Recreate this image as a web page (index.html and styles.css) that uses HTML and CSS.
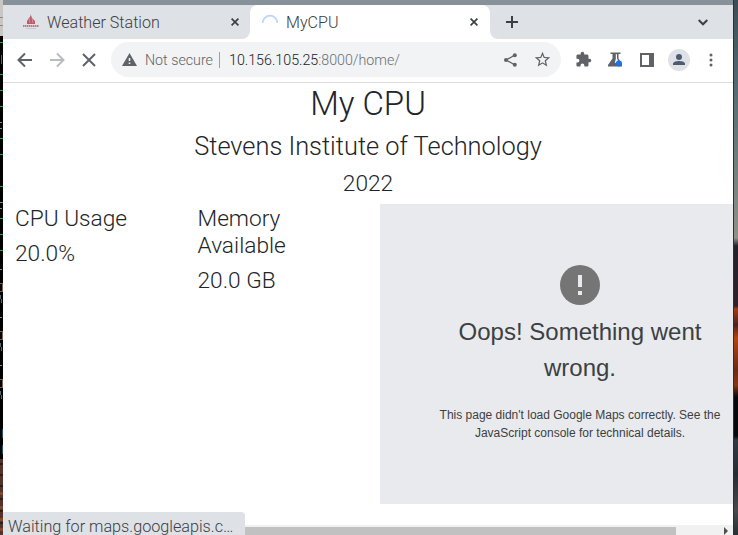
FILE: index.html
```html
<!DOCTYPE html>
<html lang="en">
<head>
<meta charset="utf-8">
<title>MyCPU</title>
<link rel="stylesheet" href="styles.css">
</head>
<body>
<div class="desktop">
  <div class="edge-left">
    <svg width="3" height="535" shape-rendering="crispEdges">
      <rect width="3" height="36" fill="#c9c7c4"/><path d="M0 17.5h3M0 25.5h3" stroke="#8d8b88"/>
      <rect y="36" width="3" height="423" fill="#000"/>
      <path d="M0 42.5h3M0 74.5h3M0 90.5h3M0 106.500h3M0 138.500h3M0 154.500h3M0 186.500h3M0 202.500h3M0 218.500h3M0 234.500h3M0 250.500h3" stroke="#2da83a"/>
      <path d="M0 122.500h2M0 128.500h2M0 202.500h2M0 208.500h2M0 269.500h2M0 317.500h2M0 365.500h2" stroke="#8a8a8a"/>
      <path d="M0 283.500h2v8h-2M0 331.500h2v8h-2M0 379.500h2v8h-2" fill="none" stroke="#77614d"/>
      <path d="M0 295l2 8M0 343l2 8M0 391l2 8M1.500 55v9" stroke="#566478"/>
      <path d="M2.500 429v9M2.500 445v9" stroke="#1f526b"/>
      <rect y="459" width="3" height="76" fill="#54332a"/>
      <path d="M0 464h3M0 475h3M0 486h3M0 499h3M0 511h3M0 523h3" stroke="#2a1d1b" stroke-width="2"/>
      <path d="M0 493h3M0 507h3M0 519h3M0 529h3" stroke="#84452f" stroke-width="3"/>
    </svg>
  </div>
  <div class="window">
    <div class="tabs">
      <div class="tab inactive">
        <svg class="favicon" width="16" height="16" viewBox="0 0 16 16"><path d="M7.500 0v2L6 4 4 7v3h8V7L9 4z" fill="#b85c69"/><path d="M6 4l1 5M9 4l1 5" stroke="#dea5ac" stroke-width=".7"/><path d="M0 12h16" stroke="#c27882" stroke-width="2" stroke-dasharray="1.500 .5"/><path d="M3 14.500h10" stroke="#d1bdc3" stroke-width=".8"/></svg>
        <span class="tab-name">Weather Station</span>
        <svg class="close" width="8" height="8" viewBox="0 0 8 8"><path d="M.6.600l6.800 6.800M7.400.6.600 7.400"/></svg>
      </div>
      <div class="tab active">
        <svg class="favicon" width="16" height="16" viewBox="0 0 16 16"><path d="M.7 9a7.300 7.300 0 1 1 14.600 0" fill="none" stroke="#bcd6fa" stroke-width="1.700"/></svg>
        <span class="tab-name">MyCPU</span>
        <svg class="close" width="8" height="8" viewBox="0 0 8 8"><path d="M.6.600l6.800 6.800M7.400.6.600 7.400"/></svg>
      </div>
      <div class="tab-tools">
        <svg width="12" height="12" viewBox="0 0 12 12"><path d="M6 0v12M0 6h12"/></svg>
        <svg width="10" height="7" viewBox="0 0 10 7"><path d="M.7 1 5 5.300 9.300 1"/></svg>
      </div>
    </div>
    <div class="toolbar">
      <svg class="ic back" width="24" height="24" viewBox="0 0 24 24"><path d="M19 12H6M12 5.500 5.500 12l6.500 6.500"/></svg>
      <svg class="ic forward" width="24" height="24" viewBox="0 0 24 24"><path d="M5 12h13M12 5.500l6.500 6.500-6.500 6.500"/></svg>
      <svg class="ic stop" width="24" height="24" viewBox="0 0 24 24"><path d="M6 6l12 12M18 6 6 18"/></svg>
      <div class="omnibox">
        <svg class="warn" width="15" height="13" viewBox="0 0 15 13"><path d="M7.500 0 15 13H0z" fill="#5f6368"/><path d="M7.500 5v3M7.500 9.500V11" stroke="#f1f3f4" stroke-width="1.600"/></svg>
        <span class="insecure">Not secure</span><i class="divider"></i>
        <span class="url"><b>10.156.105.25</b>:8000/home/</span>
        <svg class="share" width="13" height="14" viewBox="0 0 13 14"><path d="M11 2 2 7l9 5" fill="none" stroke="#5f6368" stroke-width="1.300"/><g fill="#5f6368"><circle cx="10.800" cy="2.200" r="2"/><circle cx="2" cy="7" r="2"/><circle cx="10.800" cy="11.800" r="2"/></g></svg>
        <svg class="star" width="17" height="17" viewBox="1 1 22 22"><path fill="#5f6368" d="M22 9.240l-7.190-.62L12 2 9.190 8.630 2 9.240l5.460 4.730L5.820 21 12 17.270 18.180 21l-1.630-7.030L22 9.240zM12 15.400l-3.760 2.270 1-4.280-3.320-2.880 4.380-.38L12 6.100l1.710 4.040 4.380.38-3.320 2.880 1 4.280L12 15.400z"/></svg>
      </div>
      <svg class="puzzle" width="17" height="17" viewBox="0 0 24 24"><path fill="#5f6368" d="M20.500 11H19V7c0-1.100-.9-2-2-2h-4V3.500a2.500 2.500 0 0 0-5 0V5H4c-1.100 0-2 .9-2 2v3.800h1.500a2.700 2.700 0 0 1 0 5.400H2V20c0 1.100.9 2 2 2h3.800v-1.500a2.700 2.700 0 0 1 5.400 0V22H17c1.100 0 2-.9 2-2v-4h1.500a2.500 2.500 0 0 0 0-5z"/></svg>
      <svg class="flask" width="15" height="15" viewBox="0 0 15 15"><path d="M2.500.500h10v1.600H10.500v4.400l3.500 5.500v2.500H0V13l4.500-6.500V2.100h-2z" fill="#5f6368"/><path d="M7.800 2.200h1.200v4.400l1 1.900-2.700 2.500H6.800l1-4z" fill="#fff"/><circle cx="11" cy="11.500" r="3" fill="#1a73e8"/></svg>
      <svg class="panel" width="14" height="14" viewBox="0 0 14 14"><path d="M0 0h14v14H0zM2 2v10h7V2z" fill="#5f6368" fill-rule="evenodd"/></svg>
      <svg class="avatar" width="22" height="22" viewBox="0 0 22 22"><circle cx="11" cy="11" r="11" fill="#dee1e6"/><circle cx="11" cy="8" r="3" fill="#4e5a70"/><path d="M5 16v-1.300C5 12.700 9 12 11 12s6 .7 6 2.700V16z" fill="#4e5a70"/></svg>
      <svg class="menu" width="4" height="14" viewBox="0 0 4 14"><g fill="#5f6368"><circle cx="2" cy="2" r="1.500"/><circle cx="2" cy="7" r="1.500"/><circle cx="2" cy="12" r="1.500"/></g></svg>
    </div>
    <main class="page">
      <header class="heading">
        <h1>My CPU</h1>
        <h3>Stevens Institute of Technology</h3>
        <h4>2022</h4>
      </header>
      <div class="row">
        <section class="col"><h4>CPU Usage</h4><h4>20.0%</h4></section>
        <section class="col"><h4>Memory Available</h4><h4>20.0 GB</h4></section>
        <section class="map-col">
          <div class="map">
            <svg class="alert" width="40" height="40" viewBox="0 0 40 40"><circle cx="20" cy="20" r="20" fill="#757575"/><path d="M18 10h4v12h-4zM18 26h4v4h-4z" fill="#e8eaed"/></svg>
            <div class="oops">Oops! Something went wrong.</div>
            <p class="detail">This page didn't load Google Maps correctly. See the JavaScript console for technical details.</p>
          </div>
        </section>
      </div>
    </main>
    <div class="scrollbar"><div class="thumb"></div><svg class="arrow" width="4" height="8" viewBox="0 0 4 8"><path d="M0 0l4 4-4 4z" fill="#505050"/></svg></div>
    <div class="status">Waiting for maps.googleapis.c…</div>
  </div>
  <div class="edge-right"></div>
</div>
</body>
</html>
```
FILE: styles.css
```css
* { box-sizing: border-box; }
body { margin: 0; overflow: hidden; font-family: Roboto, sans-serif; font-weight: 300; }
svg { display: block; flex: none; }
.desktop { display: flex; width: 738px; height: 535px; }
.edge-left { width: 3px; }
.edge-right {
  width: 5px;
  border-left: 1px solid #24323a;
  background: linear-gradient(#3b4c55 0, #536972 80px, #6c7c7b 150px, #8d9187 238px, #23212b 246px, #30202b 306px, #a33b12 309px, #4d211f 325px, #b3440e 338px, #6b2914 370px, #873511 385px, #08080c 397px, #06080c 436px, #303a40 440px, #252d33 475px, #48494c 510px, #273034 535px);
}
.window {
  position: relative;
  display: flex;
  flex-direction: column;
  width: 730px;
  height: 535px;
  overflow: hidden;
  border-top: 5px solid #87919a;
  background: #fff;
}

.tabs { display: flex; height: 34px; background: linear-gradient(#dee1e6 50%, #fff 50%); }
.tab { display: flex; align-items: center; font-size: 16.1px; color: #3c4043; }
.tab-name { flex: 1; line-height: 34px; padding-top: 1px; }
.inactive { width: 247px; padding: 0 11px 0 20px; background: #dee1e6; border-bottom-right-radius: 8px; }
.active { width: 240px; padding: 0 12px; background: #fff; border-radius: 8px 8px 0 0; }
.favicon { margin-right: 8px; }
.close { fill: none; stroke: #3c4043; stroke-width: 1.7; }
.tab-tools { display: flex; flex: 1; align-items: center; justify-content: space-between; padding: 0 25px 0 16px; background: #dee1e6; border-bottom-left-radius: 8px; }
.tab-tools svg { fill: none; stroke: #3c4043; stroke-width: 2; }

.toolbar { display: flex; align-items: center; height: 44px; padding: 0 20px 2px 10px; border-bottom: 1px solid #dadce0; }
.ic { fill: none; stroke: #5f6368; stroke-width: 2; }
.forward { margin-left: 8px; stroke: #b9bbbe; }
.stop { margin-left: 8px; }
.omnibox { display: flex; align-items: center; width: 450px; height: 35px; margin-left: 10px; padding: 0 10px 0 11px; border-radius: 18px; background: #f1f3f4; font-size: 14.25px; }
.insecure { margin-left: 8px; color: #5f6368; }
.divider { width: 1px; height: 16px; margin: 0 9px 0 6px; background: #9aa0a6; }
.url { flex: 1; color: #6b7075; }
.url b { color: #202124; font-weight: 300; }
.star { margin-left: 17px; }
.puzzle { margin-left: 14px; }
.flask { margin-left: 16px; }
.panel { margin-left: 17px; }
.avatar { margin-left: 14px; }
.menu { margin-left: auto; }

.page { flex: 1; overflow: hidden; color: #212529; }
h1, h3, h4 { margin: 0 0 7px; padding-top: 1px; font-weight: 300; line-height: 1.2; }
h1 { font-size: 33px; }
h3 { margin-bottom: 8px; padding-top: 0; font-size: 25.35px; line-height: 30.2px; }
h4 { font-size: 22.7px; line-height: 27.1px; }
.heading { text-align: center; }
.row { display: flex; }
.col { flex: none; width: 182.5px; padding: 0 12px; }
.map-col { flex: none; padding-left: 12px; }
.map { display: flex; flex-direction: column; align-items: center; width: 400px; height: 300px; padding: 61px 50px 0; background: #e8eaed; font-family: "Liberation Sans", Arial, sans-serif; font-weight: 400; color: #3c4043; text-align: center; }
.oops { margin-top: 9px; font-size: 24px; line-height: 36px; }
.detail { margin: 20px 0 0; font-size: 12px; line-height: 18px; }

.scrollbar { display: flex; align-items: center; height: 10px; padding: 2px 5px 0 0; background: #f1f1f1; }
.thumb { width: 673px; height: 8px; background: #c1c1c1; }
.arrow { margin-left: auto; }
.status { position: absolute; left: 0; bottom: 0; width: 242px; height: 23px; padding-left: 5px; overflow: hidden; border-top-right-radius: 4px; background: #dee1e6; font-size: 16.2px; line-height: 29px; white-space: nowrap; color: #3c4043; }
```
